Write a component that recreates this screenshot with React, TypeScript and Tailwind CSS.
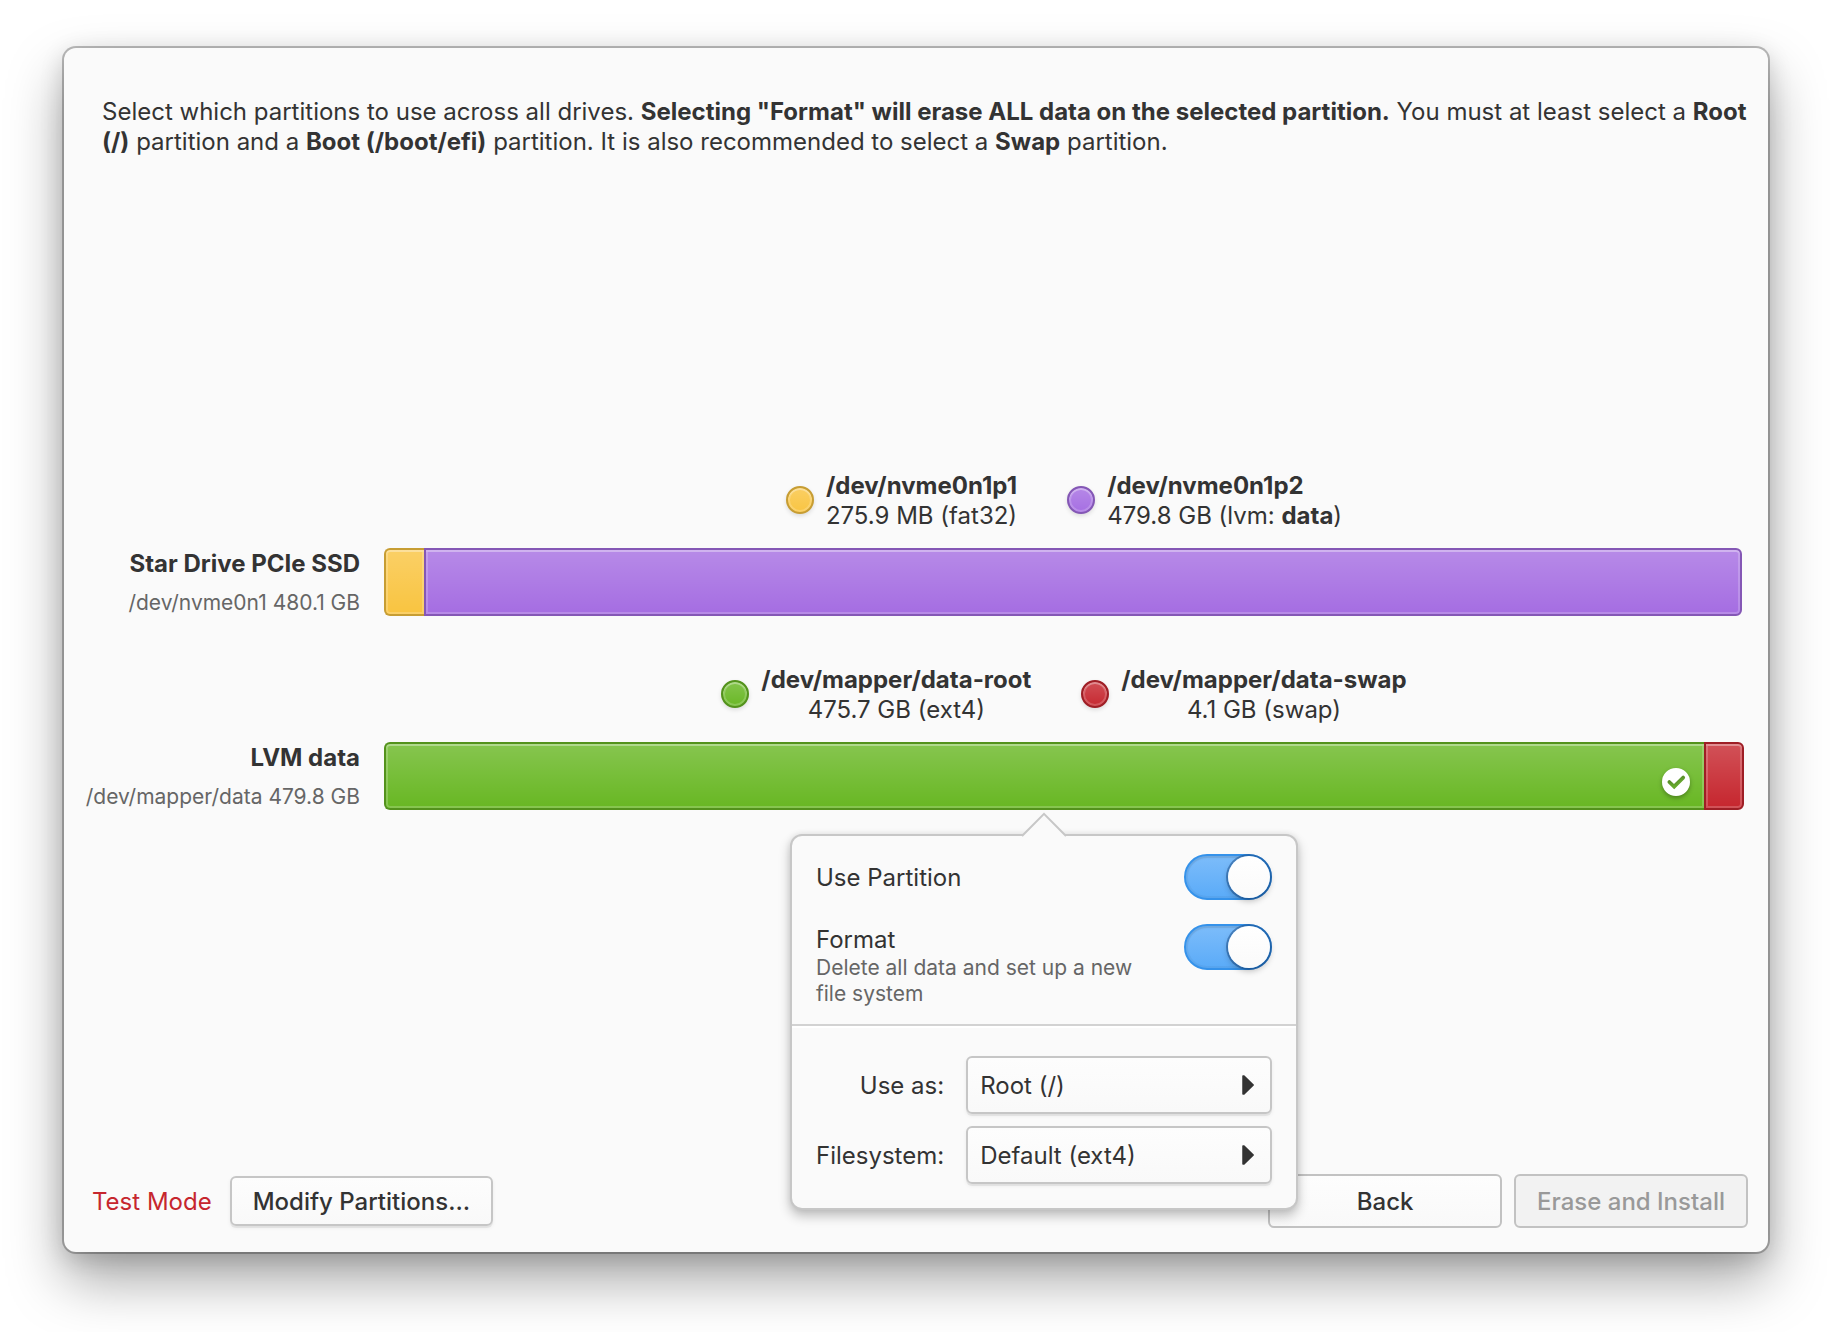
import React, { useState } from "react";

type Partition = {
  name: string;
  detail: React.ReactNode;
  color: string;
  align?: "start" | "center";
};

const YELLOW = "border-[#c79d33] bg-[#f9c440]";
const PURPLE = "border-[#8457b5] bg-[#a56de2]";
const GREEN = "border-[#53921c] bg-[#68b723]";
const RED = "border-[#9e1e25] bg-[#c6262e]";

const GLOSS = "bg-linear-to-b from-white/20 to-white/0";
const BEVEL = "shadow-[inset_0_0_0_2px_rgba(255,255,255,0.2),inset_0_2px_0_0_rgba(255,255,255,0.2)]";

function Legend({ partitions }: { partitions: Partition[] }) {
  return (
    <ul className="flex justify-center gap-[50px]">
      {partitions.map((p) => (
        <li key={p.name} className="flex items-start gap-3">
          <span
            className={`mt-4 size-7 rounded-full border-2 ${p.color} ${GLOSS} bg-origin-border shadow-[inset_0_0_0_2px_rgba(255,255,255,0.2),inset_0_2px_0_0_rgba(255,255,255,0.2),0_2px_4px_rgba(0,0,0,0.12)]`}
          />
          <span className={p.align === "start" ? "flex flex-col items-start pt-px" : "flex flex-col items-center pt-px"}>
            <strong className="font-bold">{p.name}</strong>
            <span>{p.detail}</span>
          </span>
        </li>
      ))}
    </ul>
  );
}

function Disk({
  title,
  subtitle,
  partitions,
  children,
}: {
  title: string;
  subtitle: string;
  partitions: Partition[];
  children: React.ReactNode;
}) {
  return (
    <section className="grid grid-cols-[272px_1fr] gap-x-6 gap-y-[17px]">
      <div className="col-start-2">
        <Legend partitions={partitions} />
      </div>
      <div className="col-start-1 flex flex-col items-end gap-3 pt-px">
        <h2 className="font-bold">{title}</h2>
        <p className="text-[21px] leading-6 whitespace-nowrap text-[#666]">{subtitle}</p>
      </div>
      <div className="flex h-[68px]">{children}</div>
    </section>
  );
}

function Switch({ id, checked, onChange }: { id: string; checked: boolean; onChange: (v: boolean) => void }) {
  return (
    <span className="relative block h-[46px] w-[88px] shrink-0">
      <input
        id={id}
        type="checkbox"
        role="switch"
        checked={checked}
        onChange={(e) => onChange(e.target.checked)}
        className="peer block h-[46px] w-[88px] appearance-none rounded-full border-2 border-[#b0b0b0] bg-[#e4e4e4] shadow-[inset_0_2px_2px_rgba(0,0,0,0.08),inset_0_0_0_2px_rgba(0,0,0,0.04)] checked:border-[#3592ea] checked:bg-linear-to-b checked:from-[#7cbcfa] checked:to-[#5aabf8]"
      />
      <span className="pointer-events-none absolute top-[2px] left-[2px] size-[42px] rounded-full bg-linear-to-b from-white to-[#fafafa] shadow-[0_0_0_1px_rgba(0,0,0,0.3),0_2px_6px_rgba(0,0,0,0.25)] peer-checked:left-[44px] peer-checked:shadow-[0_0_0_2px_rgba(10,60,120,0.45),0_3px_6px_rgba(0,0,0,0.25)]" />
    </span>
  );
}

function Dropdown({ id, label, options }: { id: string; label: string; options: string[] }) {
  return (
    <>
      <label htmlFor={id} className="pt-[2px] text-right">
        {label}
      </label>
      <span className="relative block">
        <select
          id={id}
          className="block h-[58px] w-full appearance-none rounded-md border-2 border-[#c6c6c6] bg-linear-to-b from-[#fdfdfd] to-[#f9f9f9] px-3 pt-[2px] shadow-[0_2px_0_rgba(0,0,0,0.06),0_2px_4px_rgba(0,0,0,0.06)]"
        >
          {options.map((o) => (
            <option key={o}>{o}</option>
          ))}
        </select>
        <svg
          viewBox="0 0 12 20"
          className="pointer-events-none absolute top-[19px] right-[18px] h-5 w-3"
          fill="#333"
          stroke="#333"
          strokeWidth="1.5"
          strokeLinejoin="round"
          aria-hidden="true"
        >
          <path d="M1 1 L2 1 L11.2 10 L2 19 L1 19 Z" />
        </svg>
      </span>
    </>
  );
}

function PartitionPopover() {
  const [use, setUse] = useState(true);
  const [format, setFormat] = useState(true);
  return (
    <div className="absolute top-full left-1/2 z-10 mt-6 w-[508px] -translate-x-1/2 rounded-xl border-2 border-[#c7c7c7] bg-[#fafafa] shadow-[0_6px_12px_rgba(0,0,0,0.24),0_0_6px_rgba(0,0,0,0.08)]">
      <svg
        viewBox="0 0 48 26"
        className="absolute -top-6 left-1/2 h-[26px] w-12 -translate-x-1/2"
        fill="#fafafa"
        aria-hidden="true"
      >
        <path d="M1 26 L2 24.5 L24 1.8 L46 24.5 L47 26 Z" />
        <path d="M2 24 L24 1.8 L46 24" fill="none" stroke="#c7c7c7" strokeWidth="2" />
      </svg>
      <div className="flex flex-col gap-6 px-6 pt-[18px] pb-[17px]">
        <div className="flex items-center justify-between">
          <label htmlFor="use-partition" className="pt-[2px]">
            Use Partition
          </label>
          <Switch id="use-partition" checked={use} onChange={setUse} />
        </div>
        <div className="flex items-start justify-between">
          <label htmlFor="format-partition" className="w-[330px] pt-px">
            Format
            <span className="block text-[21px] leading-[26px] text-[#666]">
              Delete all data and set up a new file system
            </span>
          </label>
          <Switch id="format-partition" checked={format} onChange={setFormat} />
        </div>
      </div>
      <div className="grid grid-cols-[auto_306px] items-center gap-x-[22px] gap-y-3 border-t-2 border-[#d2d2d2] px-6 pt-[30px] pb-6 shadow-[inset_0_2px_0_#fff]">
        <Dropdown id="use-as" label="Use as:" options={["Root (/)", "Home (/home)", "Boot (/boot/efi)", "Swap", "Custom"]} />
        <Dropdown id="filesystem" label="Filesystem:" options={["Default (ext4)", "btrfs", "xfs", "fat32"]} />
      </div>
    </div>
  );
}

function InUseBadge() {
  return (
    <svg
      viewBox="0 0 28 28"
      className="absolute right-[14px] bottom-[14px] size-7 overflow-visible drop-shadow-[0_2px_2px_rgba(0,0,0,0.3)]"
      aria-label="In use"
      role="img"
    >
      <path
        fill="#fff"
        fillRule="evenodd"
        d="M14 0a14 14 0 1 0 0 28a14 14 0 0 0 0-28ZM22.5 8.2a1.9 1.9 0 0 1 0 2.7L12.2 21.2L6 15.3a1.9 1.9 0 0 1 0-2.6a1.9 1.9 0 0 1 2.6 0L12 16L19.9 8.2a1.9 1.9 0 0 1 2.6 0Z"
      />
    </svg>
  );
}

export default function App() {
  return (
    <div className="flex min-h-screen flex-col bg-white px-16 pt-12 pb-20 font-['Inter',sans-serif] text-[24px] leading-[30px] text-[#333]">
      <main className="flex grow flex-col rounded-[12px] bg-[#fafafa] shadow-[0_0_0_2px_rgba(0,0,0,0.25),0_28px_56px_rgba(0,0,0,0.35),0_6px_24px_rgba(0,0,0,0.16)]">
        <p className="pt-[49px] pr-5 pl-[38px]">
          Select which partitions to use across all drives.{" "}
          <strong className="font-bold">Selecting "Format" will erase ALL data on the selected partition.</strong> You
          must at least select a <strong className="font-bold">Root</strong>{" "}
          <strong className="font-bold">(/)</strong> partition and a{" "}
          <strong className="font-bold">Boot (/boot/efi)</strong> partition. It is also recommended to select a{" "}
          <strong className="font-bold">Swap</strong> partition.
        </p>

        <div className="flex grow flex-col justify-center gap-12 px-6 pb-[51px]">
          <Disk
            title="Star Drive PCIe SSD"
            subtitle="/dev/nvme0n1 480.1 GB"
            partitions={[
              { name: "/dev/nvme0n1p1", detail: "275.9 MB (fat32)", color: YELLOW },
              {
                name: "/dev/nvme0n1p2",
                align: "start",
                detail: (
                  <>
                    479.8 GB (lvm: <strong className="font-bold">data</strong>)
                  </>
                ),
                color: PURPLE,
              },
            ]}
          >
            <div className={`w-10 rounded-l-md border-2 border-r-0 ${YELLOW} ${GLOSS} ${BEVEL}`} />
            <div className={`mr-[2px] grow rounded-r-md border-2 ${PURPLE} ${GLOSS} ${BEVEL}`} />
          </Disk>

          <Disk
            title="LVM data"
            subtitle="/dev/mapper/data 479.8 GB"
            partitions={[
              { name: "/dev/mapper/data-root", detail: "475.7 GB (ext4)", color: GREEN },
              { name: "/dev/mapper/data-swap", detail: "4.1 GB (swap)", color: RED },
            ]}
          >
            <div className="relative flex grow">
              <div className={`grow rounded-l-md border-2 border-r-0 ${GREEN} ${GLOSS} ${BEVEL}`} />
              <InUseBadge />
              <PartitionPopover />
            </div>
            <div className={`w-10 rounded-r-md border-2 ${RED} ${GLOSS} ${BEVEL}`} />
          </Disk>
        </div>

        <footer className="flex items-center pr-5 pb-6 pl-7">
          <span className="mr-[18px] pt-[2px] text-[#c6262e]">Test Mode</span>
          <button
            type="button"
            className="h-[50px] rounded-md border-2 border-[#c6c6c6] bg-linear-to-b from-[#fdfdfd] to-[#f9f9f9] px-[21px] pt-[2px] font-medium shadow-[0_2px_0_rgba(0,0,0,0.06),0_2px_4px_rgba(0,0,0,0.06)]"
          >
            Modify Partitions…
          </button>
          <div className="ml-auto grid grid-cols-2 gap-3">
            <button
              type="button"
              className="h-[54px] rounded-md border-2 border-[#c2c2c2] bg-linear-to-b from-[#fdfdfd] to-[#f9f9f9] px-[21px] pt-[2px] font-medium"
            >
              Back
            </button>
            <button
              type="button"
              disabled
              className="h-[54px] rounded-md border-2 border-[#c2c2c2] bg-[#f2f2f2] px-[21px] pt-[2px] font-medium text-[#999]"
            >
              Erase and Install
            </button>
          </div>
        </footer>
      </main>
    </div>
  );
}
